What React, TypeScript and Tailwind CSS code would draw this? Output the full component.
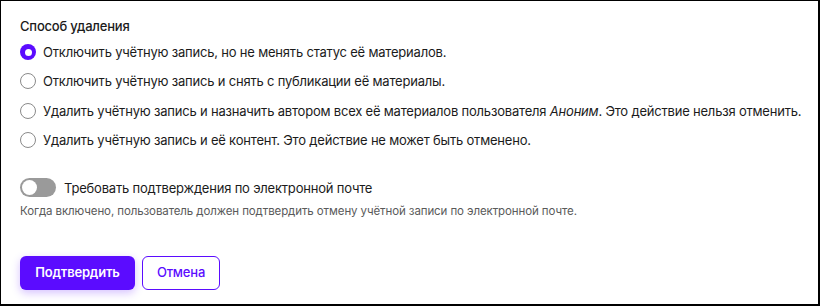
import { useState } from "react";

const OPTIONS = [
  { id: "disable", label: <>Отключить учётную запись, но не менять статус её материалов.</> },
  { id: "unpublish", label: <>Отключить учётную запись и снять с публикации её материалы.</> },
  {
    id: "reassign",
    label: (
      <>
        Удалить учётную запись и назначить автором всех её материалов пользователя <em>Аноним</em>. Это действие
        нельзя отменить.
      </>
    ),
  },
  { id: "delete", label: <>Удалить учётную запись и её контент. Это действие не может быть отменено.</> },
];

function Radio({ checked }: { checked: boolean }) {
  return checked ? (
    <span className="w-4 h-4 rounded-full bg-[#5b0cff] flex items-center justify-center shrink-0">
      <span className="w-[7px] h-[7px] rounded-full bg-white" />
    </span>
  ) : (
    <span className="w-4 h-4 rounded-full border border-[#8a8a8a] bg-white shrink-0" />
  );
}

export default function App() {
  const [method, setMethod] = useState("disable");
  const [confirm, setConfirm] = useState(false);

  return (
    <div
      className="w-[820px] h-[306px] bg-white border-l border-t border-r-2 border-b-2 border-black text-[#1b1b1b] pl-[19px] pt-[15px] tracking-[-0.2px]"
      style={{ fontFamily: "Inter, 'Noto Sans', sans-serif" }}
    >
      <div className="text-[13px] leading-5 font-medium">Способ удаления</div>

      <div className="mt-[6px] flex flex-col gap-[9.3px]">
        {OPTIONS.map((o) => (
          <label
            key={o.id}
            className="flex items-center gap-[7px] h-5 text-[13px] leading-5 cursor-pointer whitespace-nowrap"
            onClick={() => setMethod(o.id)}
          >
            <Radio checked={method === o.id} />
            <span>{o.label}</span>
          </label>
        ))}
      </div>

      <div className="mt-[28px] flex items-center gap-[8px] h-5">
        <button
          type="button"
          onClick={() => setConfirm(!confirm)}
          className={
            confirm
              ? "w-[36px] h-[19px] rounded-full bg-[#5b0cff] flex items-center justify-end px-[2px]"
              : "w-[36px] h-[19px] rounded-full bg-[#9a9a9a] flex items-center px-[2px]"
          }
        >
          <span className="w-[15px] h-[15px] rounded-full bg-white" />
        </button>
        <span className="text-[13px] leading-5">Требовать подтверждения по электронной почте</span>
      </div>
      <p className="mt-[5px] text-[11.5px] leading-4 text-[#5a5a5a] tracking-[-0.1px]">
        Когда включено, пользователь должен подтвердить отмену учётной записи по электронной почте.
      </p>

      <div className="mt-[37px] flex gap-[7px]">
        <button
          type="button"
          className="h-[34px] w-[115px] rounded-md bg-[#5b0cff] text-white text-[13px] font-semibold shadow-[0_3px_8px_rgba(91,12,255,0.25)]"
        >
          Подтвердить
        </button>
        <button
          type="button"
          className="h-[34px] w-[78px] rounded-md border border-[#5b0cff] text-[#5b0cff] bg-white text-[13px] font-medium"
        >
          Отмена
        </button>
      </div>
    </div>
  );
}
